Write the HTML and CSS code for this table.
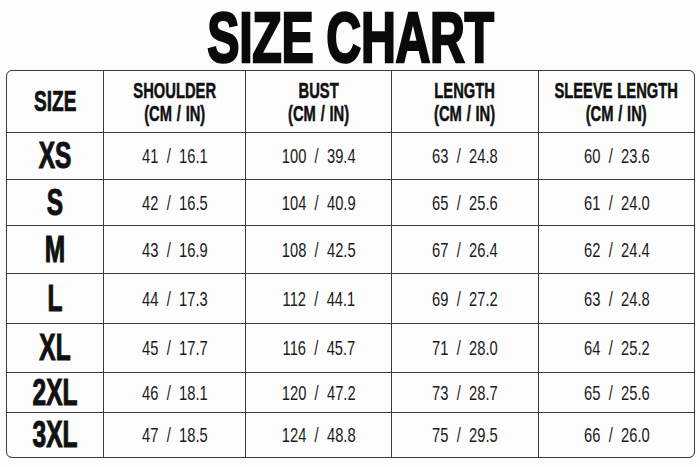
FILE: index.html
```html
<!DOCTYPE html>
<html lang="en">
<head>
<meta charset="utf-8">
<title>Size Chart</title>
<link rel="stylesheet" href="styles.css">
</head>
<body>
<h1 class="title"><span class="squeeze">SIZE CHART</span></h1>
<div class="chart">
  <div class="cell head"><span class="squeeze size-head">SIZE</span></div>
  <div class="cell head"><span class="squeeze col-head">SHOULDER<br>(CM / IN)</span></div>
  <div class="cell head"><span class="squeeze col-head">BUST<br>(CM / IN)</span></div>
  <div class="cell head"><span class="squeeze col-head">LENGTH<br>(CM / IN)</span></div>
  <div class="cell head"><span class="squeeze col-head">SLEEVE LENGTH<br>(CM / IN)</span></div>

  <div class="cell"><span class="squeeze size">XS</span></div>
  <div class="cell"><span class="squeeze val">41 / 16.1</span></div>
  <div class="cell"><span class="squeeze val">100 / 39.4</span></div>
  <div class="cell"><span class="squeeze val">63 / 24.8</span></div>
  <div class="cell"><span class="squeeze val">60 / 23.6</span></div>

  <div class="cell"><span class="squeeze size">S</span></div>
  <div class="cell"><span class="squeeze val">42 / 16.5</span></div>
  <div class="cell"><span class="squeeze val">104 / 40.9</span></div>
  <div class="cell"><span class="squeeze val">65 / 25.6</span></div>
  <div class="cell"><span class="squeeze val">61 / 24.0</span></div>

  <div class="cell"><span class="squeeze size">M</span></div>
  <div class="cell"><span class="squeeze val">43 / 16.9</span></div>
  <div class="cell"><span class="squeeze val">108 / 42.5</span></div>
  <div class="cell"><span class="squeeze val">67 / 26.4</span></div>
  <div class="cell"><span class="squeeze val">62 / 24.4</span></div>

  <div class="cell"><span class="squeeze size">L</span></div>
  <div class="cell"><span class="squeeze val">44 / 17.3</span></div>
  <div class="cell"><span class="squeeze val">112 / 44.1</span></div>
  <div class="cell"><span class="squeeze val">69 / 27.2</span></div>
  <div class="cell"><span class="squeeze val">63 / 24.8</span></div>

  <div class="cell"><span class="squeeze size">XL</span></div>
  <div class="cell"><span class="squeeze val">45 / 17.7</span></div>
  <div class="cell"><span class="squeeze val">116 / 45.7</span></div>
  <div class="cell"><span class="squeeze val">71 / 28.0</span></div>
  <div class="cell"><span class="squeeze val">64 / 25.2</span></div>

  <div class="cell"><span class="squeeze size">2XL</span></div>
  <div class="cell"><span class="squeeze val">46 / 18.1</span></div>
  <div class="cell"><span class="squeeze val">120 / 47.2</span></div>
  <div class="cell"><span class="squeeze val">73 / 28.7</span></div>
  <div class="cell"><span class="squeeze val">65 / 25.6</span></div>

  <div class="cell"><span class="squeeze size">3XL</span></div>
  <div class="cell"><span class="squeeze val">47 / 18.5</span></div>
  <div class="cell"><span class="squeeze val">124 / 48.8</span></div>
  <div class="cell"><span class="squeeze val">75 / 29.5</span></div>
  <div class="cell"><span class="squeeze val">66 / 26.0</span></div>
</div>
</body>
</html>
```
FILE: styles.css
```css
* { box-sizing: border-box; }

html, body {
  margin: 0;
  padding: 0;
  background: #fdfdfd;
  color: #111;
  font-family: "Liberation Sans", Arial, sans-serif;
}

.title {
  margin: 0;
  padding-top: 5px;
  height: 70px;
  line-height: 66px;
  font-size: 70px;
  font-weight: 700;
  text-align: center;
  color: #0a0a0a;
}

.squeeze {
  display: inline-block;
  transform-origin: center center;
  white-space: nowrap;
}

.title .squeeze {
  transform: scaleX(0.69);
  -webkit-text-stroke: 2.5px #0a0a0a;
  letter-spacing: -0.5px;
}

.chart {
  margin-left: 6px;
  width: 689px;
  display: grid;
  grid-template-columns: 96px 141px 145px 146px 155px;
  grid-template-rows: 61px 46px 45px 47px 49px 48px 39px 44px;
  gap: 1px;
  background: #3c3c3c;
  border: 1px solid #3c3c3c;
  border-radius: 6px;
  overflow: hidden;
}

.cell {
  background: #fdfdfd;
  display: flex;
  align-items: center;
  justify-content: center;
  text-align: center;
}

.size-head {
  font-size: 29px;
  font-weight: 700;
  transform: scaleX(0.66);
  -webkit-text-stroke: 0.7px #111;
}

.col-head {
  font-size: 22px;
  line-height: 23px;
  font-weight: 700;
  word-spacing: 1px;
  transform: scaleX(0.67);
  -webkit-text-stroke: 0.5px #111;
}

.size {
  font-size: 36px;
  font-weight: 700;
  transform: scaleX(0.68);
  -webkit-text-stroke: 1.1px #111;
}

.val {
  font-size: 21px;
  font-weight: 400;
  word-spacing: 6px;
  transform: scaleX(0.7);
  color: #1a1a1a;
}
```
